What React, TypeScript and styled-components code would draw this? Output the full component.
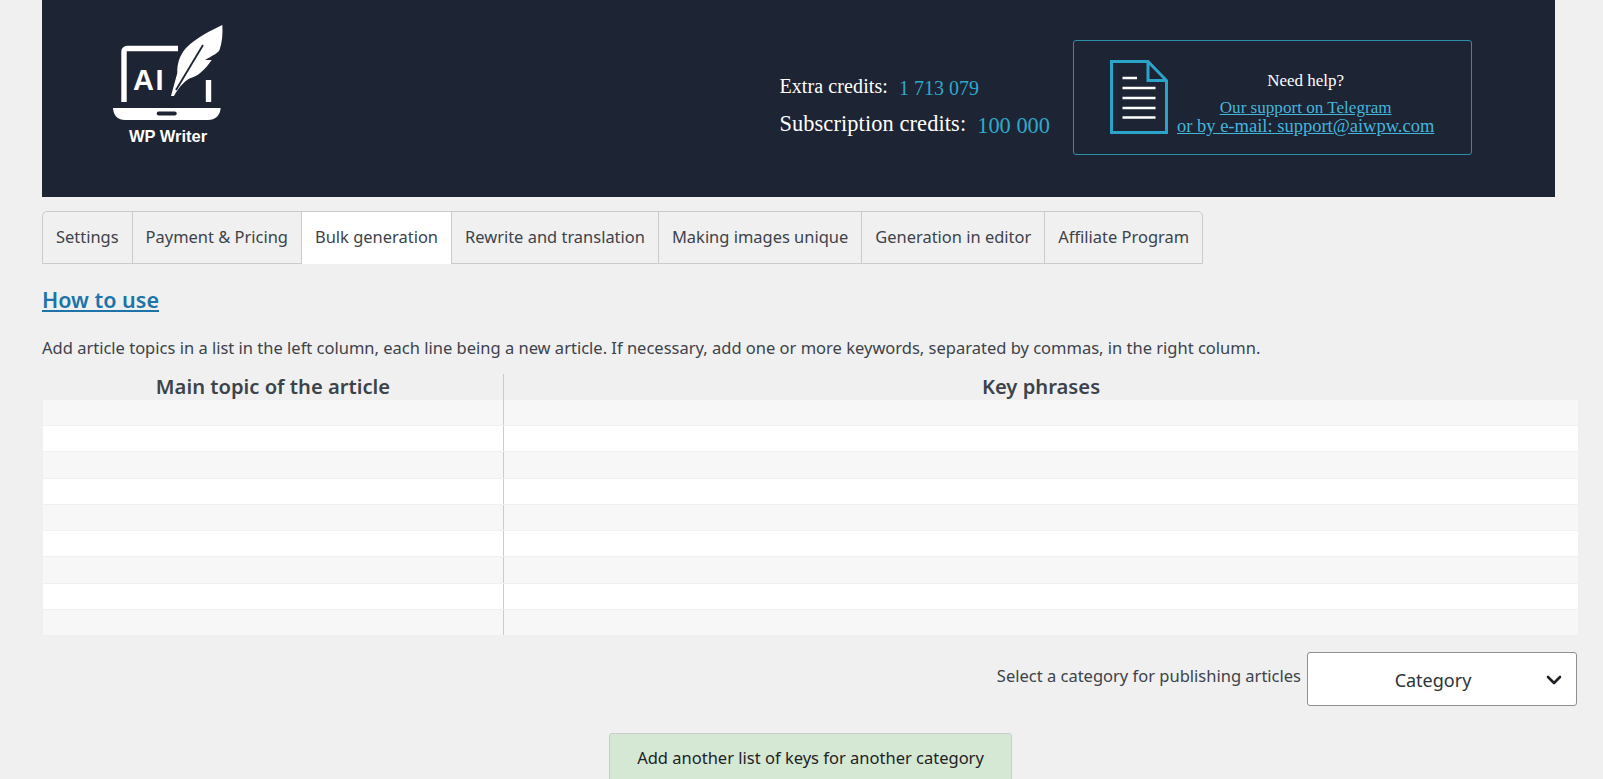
import React from 'react';
import styled, { createGlobalStyle } from 'styled-components';
import { ChevronDown } from 'lucide-react';

const GlobalStyle = createGlobalStyle`
  html, body {
    margin: 0;
    height: 779px;
    overflow: hidden;
    background: #f0f0f0;
    color: #3c434a;
    font-family: "Noto Sans", "Open Sans", sans-serif;
  }
`;

const tabs = [
  'Settings',
  'Payment & Pricing',
  'Bulk generation',
  'Rewrite and translation',
  'Making images unique',
  'Generation in editor',
  'Affiliate Program',
];

const rows = [0, 1, 2, 3, 4, 5, 6, 7, 8];

export default function App() {
  return (
    <Page>
      <GlobalStyle />
      <Header>
        <Logo />
        <Credits>
          <CreditLine $size={20}>
            <CreditLabel>Extra credits:</CreditLabel>
            <CreditValue>1 713 079</CreditValue>
          </CreditLine>
          <CreditLine $size={22.4}>
            <CreditLabel>Subscription credits:</CreditLabel>
            <CreditValue>100 000</CreditValue>
          </CreditLine>
        </Credits>
        <HelpBox>
          <DocIcon />
          <HelpText>
            <HelpTitle>Need help?</HelpTitle>
            <HelpLink href="#" $size={17.1}>Our support on Telegram</HelpLink>
            <HelpLink href="#" $size={18.5}>or by e-mail: support@aiwpw.com</HelpLink>
          </HelpText>
        </HelpBox>
      </Header>

      <TabBar>
        {tabs.map(tab => (
          <Tab key={tab} $active={tab === 'Bulk generation'}>
            {tab}
          </Tab>
        ))}
      </TabBar>

      <HowTo href="#">How to use</HowTo>
      <Intro>
        Add article topics in a list in the left column, each line being a new
        article. If necessary, add one or more keywords, separated by commas, in
        the right column.
      </Intro>

      <KeysTable>
        <TableHead>
          <HeadCell>Main topic of the article</HeadCell>
          <HeadCell $divided>Key phrases</HeadCell>
        </TableHead>
        <TableBody>
          {rows.map(row => (
            <Row key={row} $odd={row % 2 === 0}>
              <Cell />
              <Cell $divided />
            </Row>
          ))}
        </TableBody>
      </KeysTable>

      <CategoryRow>
        <CategoryLabel>Select a category for publishing articles</CategoryLabel>
        <SelectBox>
          <SelectValue>Category</SelectValue>
          <ChevronDown size={24} strokeWidth={2.6} color="#1d2327" />
        </SelectBox>
      </CategoryRow>

      <AddRow>
        <AddButton>Add another list of keys for another category</AddButton>
      </AddRow>
    </Page>
  );
}

const Logo = () => (
  <LogoSvg viewBox="0 0 150 140" width={150} height={140}>
    <path d="M88 38.5H37a3 3 0 0 0-3 3V92" fill="none" stroke="#fff" strokeWidth={5.4} />
    <path d="M118.5 70V92" fill="none" stroke="#fff" strokeWidth={5.4} />
    <path d="M23 98H130.7C130 106 125 110 118 110H35C28 110 23.5 106 23 98Z" fill="#fff" />
    <rect x={66.7} y={101.5} width={20} height={4} rx={2} fill="#1d2433" />
    <path
      d="M132.300 15C122 20 107 27 96 38C89 46 87 55 87.300 63L81 86L84 86C88 79 93 72 100 68.300C108 66 115 60 121.700 50L115 50C122 46 128 43 129.500 40C132 33 133 24 132.300 15Z"
      fill="#fff"
    />
    <path d="M113 35L86 80" fill="none" stroke="#1d2433" strokeWidth={1.8} />
    <LogoMark x={43} y={80} fontSize={29}>AI</LogoMark>
    <LogoText x={78} y={132} fontSize={16.5} textAnchor="middle">WP Writer</LogoText>
  </LogoSvg>
);

const DocIcon = () => (
  <svg viewBox="0 0 58 74" width={58} height={74}>
    <path d="M1.500 1.500H38L56.500 20.500V72.500H1.500Z" fill="none" stroke="#2aa5c9" strokeWidth={3} />
    <path d="M38 1.500V20.500H56.500" fill="none" stroke="#2aa5c9" strokeWidth={3} />
    <path d="M12.500 18H27M12.500 28H45.500M12.500 38H45.500M12.500 48H45.500M12.500 57.500H45.500" stroke="#fff" strokeWidth={2.4} />
  </svg>
);

const Page = styled.div`
  padding-left: 42px;
  padding-right: 25px;
  height: 779px;
  overflow: hidden;
  box-sizing: border-box;
`;

const Header = styled.header`
  display: flex;
  align-items: flex-start;
  width: 1513px;
  height: 197px;
  padding-left: 48px;
  box-sizing: border-box;
  background: #1d2433;
  font-family: "Liberation Serif", "Times New Roman", serif;
`;

const LogoSvg = styled.svg`
  margin-top: 10px;
  flex: none;
`;

const LogoText = styled.text`
  font-family: "Liberation Sans", Arial, sans-serif;
  font-weight: 700;
  fill: #fff;
`;

const LogoMark = styled(LogoText)`
  letter-spacing: 1.5px;
`;

const Credits = styled.div`
  display: flex;
  flex-direction: column;
  gap: 11px;
  margin-left: auto;
  margin-top: 75px;
  margin-right: 23px;
  color: #fff;
`;

const CreditLine = styled.div<{ $size: number }>`
  display: flex;
  gap: 11px;
  font-size: ${p => p.$size}px;
  line-height: ${p => Math.round(p.$size * 1.15)}px;
`;

const CreditLabel = styled.span`
  letter-spacing: 0.1px;
`;

const CreditValue = styled.span`
  padding-top: 2px;
  color: #2ea9cc;
`;

const HelpBox = styled.div`
  display: flex;
  align-items: flex-start;
  gap: 9px;
  width: 399px;
  height: 115px;
  margin-top: 40px;
  margin-right: 83px;
  padding: 19px 0 0 36px;
  box-sizing: border-box;
  border: 1px solid #2a8fa8;
  border-radius: 3px;
  flex: none;
`;

const HelpText = styled.div`
  display: flex;
  flex-direction: column;
  align-items: center;
  margin-top: 9px;
  color: #fff;
`;

const HelpTitle = styled.div`
  margin-bottom: 5px;
  font-size: 17px;
  line-height: 24px;
`;

const HelpLink = styled.a<{ $size: number }>`
  font-size: ${p => p.$size}px;
  line-height: 19px;
  color: #45b5dc;
`;

const TabBar = styled.nav`
  display: inline-flex;
  margin-top: 14px;
  border: 1px solid #c9cbcd;
  border-radius: 5px 5px 0 0;
  height: 53px;
  box-sizing: border-box;
`;

const Tab = styled.div<{ $active?: boolean }>`
  padding: 0 13px;
  font-size: 16.470px;
  line-height: 50px;
  white-space: nowrap;
  background: ${p => (p.$active ? '#fff' : 'transparent')};
  margin-bottom: ${p => (p.$active ? '-1px' : '0')};
  & + & {
    border-left: 1px solid #c9cbcd;
  }
`;

const HowTo = styled.a`
  display: block;
  width: max-content;
  margin-top: 21px;
  font-size: 21.500px;
  line-height: 30px;
  font-weight: 600;
  color: #1d74a8;
`;

const Intro = styled.p`
  margin: 21px 0 0;
  font-size: 16.500px;
  line-height: 24px;
`;

const KeysTable = styled.section`
  margin-top: 14px;
`;

const TableHead = styled.div`
  display: grid;
  grid-template-columns: 460px 1fr;
  height: 26px;
  padding-left: 1px;
`;

const HeadCell = styled.div<{ $divided?: boolean }>`
  text-align: center;
  font-size: 20.200px;
  line-height: 24px;
  font-weight: 600;
  border-left: ${p => (p.$divided ? '1px solid #c9cbcd' : 'none')};
`;

const TableBody = styled.div`
  display: grid;
  grid-template-rows: repeat(9, 1fr);
  height: 236px;
  padding-left: 1px;
`;

const Row = styled.div<{ $odd: boolean }>`
  display: grid;
  grid-template-columns: 460px 1fr;
  background: ${p => (p.$odd ? '#f7f7f7' : '#fff')};
  border-bottom: 1px solid #f0f0f0;
`;

const Cell = styled.div<{ $divided?: boolean }>`
  border-left: ${p => (p.$divided ? '1px solid #c9cbcd' : 'none')};
`;

const CategoryRow = styled.div`
  display: flex;
  justify-content: flex-end;
  align-items: flex-start;
  gap: 6px;
  margin-top: 16px;
  padding-right: 1px;
`;

const CategoryLabel = styled.span`
  margin-top: 12px;
  font-size: 16.500px;
  line-height: 24px;
`;

const SelectBox = styled.div`
  display: grid;
  grid-template-columns: 1fr auto;
  align-items: center;
  width: 270px;
  height: 54px;
  padding: 2px 10px 0 16px;
  box-sizing: border-box;
  background: #fff;
  border: 1px solid #8c8f94;
  border-radius: 3px;
  font-size: 18px;
  color: #2c3338;
`;

const SelectValue = styled.span`
  text-align: center;
`;

const AddRow = styled.div`
  display: flex;
  justify-content: flex-start;
  margin-top: 27px;
  padding-left: 567px;
`;

const AddButton = styled.div`
  display: flex;
  align-items: center;
  justify-content: center;
  width: 403px;
  height: 50px;
  box-sizing: border-box;
  padding-bottom: 1px;
  background: #d5e8d4;
  border: 1px solid #c9cbcd;
  border-radius: 3px;
  font-size: 16.500px;
  color: #1d2327;
`;
